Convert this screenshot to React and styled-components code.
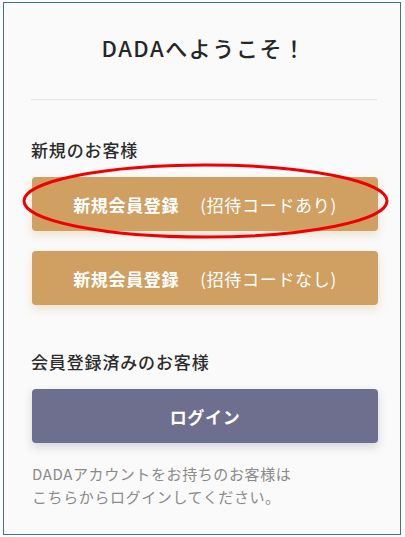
import React from "react";
import styled, { createGlobalStyle } from "styled-components";

const Global = createGlobalStyle`
  html, body { margin: 0; padding: 0; background: #ffffff; }
  body { font-family: "Noto Sans CJK JP", "Noto Sans", sans-serif; }
  * { box-sizing: border-box; }
`;

const Frame = styled.div`
  position: relative;
  margin: 2px 0 0 3px;
  width: 398px;
  height: 533px;
  border: 1px solid #3d6ea6;
  background: #fafafa;
  padding: 29px 23px 0 27px;
  display: flex;
  flex-direction: column;
`;

const Title = styled.h1`
  margin: 0;
  font-size: 22px;
  line-height: 30px;
  font-weight: 500;
  letter-spacing: 0.07em;
  color: #262626;
  text-align: center;
`;

const Divider = styled.hr`
  margin: 37px 0 0;
  border: none;
  height: 1px;
  background: #e2e2e2;
`;

const SectionTitle = styled.h2`
  margin: ${(p) => p.$top}px 0 0;
  font-size: 17px;
  line-height: 24px;
  font-weight: 500;
  letter-spacing: 0.05em;
  color: #2b2b2b;
`;

const ButtonStack = styled.div`
  display: flex;
  flex-direction: column;
  gap: 20px;
  margin-top: 15px;
`;

const Button = styled.button`
  width: 346px;
  margin-left: 1px;
  height: 54px;
  border: none;
  border-radius: 4px;
  background: ${(p) => (p.$variant === "login" ? "#6e6e8f" : "#cfa062")};
  box-shadow: 0 4px 10px ${(p) =>
    p.$variant === "login" ? "rgba(80, 80, 120, 0.22)" : "rgba(190, 140, 60, 0.22)"};
  color: #ffffff;
  font-family: "Noto Sans CJK JP", "Noto Sans", sans-serif;
  font-size: 17px;
  font-weight: 700;
  letter-spacing: 0.04em;
  display: flex;
  align-items: center;
  justify-content: center;
  padding: 0;
  cursor: pointer;
`;

const Sub = styled.span`
  font-weight: 400;
  margin-left: 21px;
`;

const Note = styled.p`
  margin: 19px 0 0 1px;
  font-size: 15px;
  line-height: 23px;
  letter-spacing: 0.6px;
  color: #8a8a8a;
`;

const Annotation = styled.svg`
  position: absolute;
  left: 17px;
  top: 157px;
  width: 370px;
  height: 82px;
  pointer-events: none;
  overflow: visible;
`;

export default function App() {
  return (
    <>
      <Global />
      <Frame>
        <Title>DADAへようこそ！</Title>
        <Divider />
        <SectionTitle $top={38}>新規のお客様</SectionTitle>
        <ButtonStack>
          <Button>
            新規会員登録<Sub>(招待コードあり)</Sub>
          </Button>
          <Button>
            新規会員登録<Sub>(招待コードなし)</Sub>
          </Button>
        </ButtonStack>
        <SectionTitle $top={45}>会員登録済みのお客様</SectionTitle>
        <ButtonStack>
          <Button $variant="login">ログイン</Button>
        </ButtonStack>
        <Note>
          DADAアカウントをお持ちのお客様は
          <br />
          こちらからログインしてください。
        </Note>
        <Annotation viewBox="0 0 370 82">
          <ellipse cx="184.5" cy="41" rx="181.5" ry="36" fill="none" stroke="#f00000" strokeWidth="3" />
        </Annotation>
      </Frame>
    </>
  );
}
